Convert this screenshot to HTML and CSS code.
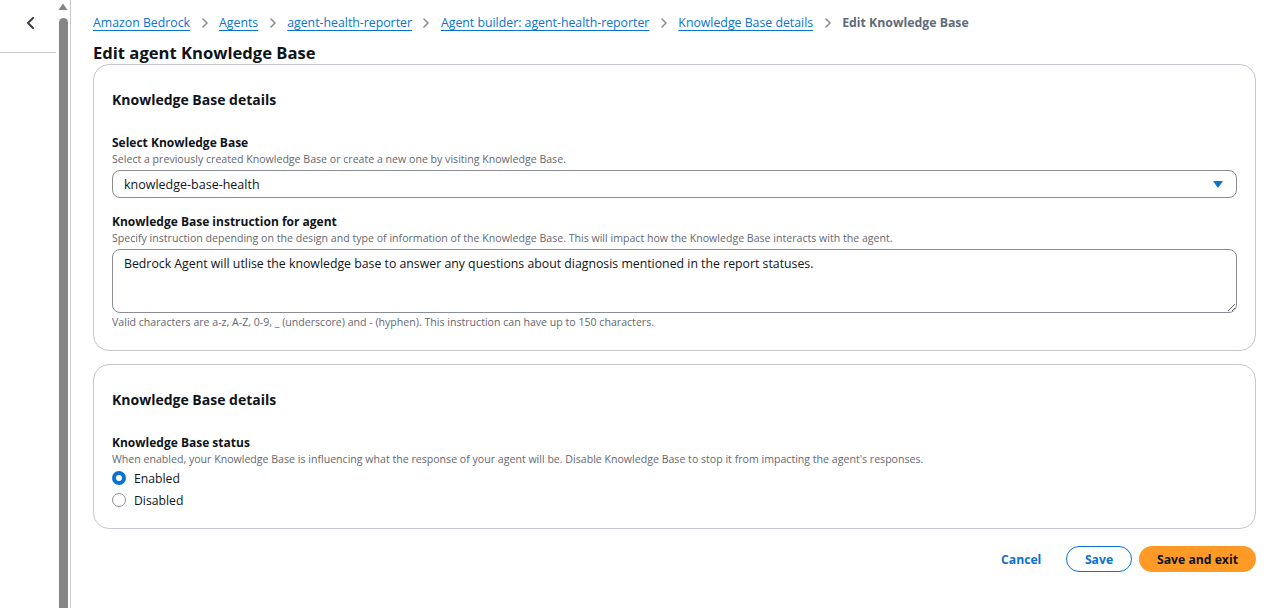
FILE: index.html
```html
<!DOCTYPE html>
<html lang="en">
<head>
<meta charset="utf-8">
<title>Edit agent Knowledge Base</title>
<link rel="stylesheet" href="styles.css">
</head>
<body>
<div class="app">
  <aside class="nav">
    <div class="nav-top">
      <svg class="nav-chev" width="10" height="12" viewBox="0 0 10 12"><path d="M7 1 L2 6 L7 11" fill="none" stroke="#3b3f46" stroke-width="2" stroke-linecap="round" stroke-linejoin="round"/></svg>
    </div>
  </aside>
  <div class="scrollbar">
    <svg class="scroll-up" width="10" height="8" viewBox="0 0 10 8"><path d="M5 0.5 L9.5 7 L0.5 7 Z" fill="#858585"/></svg>
    <div class="scroll-thumb"></div>
  </div>
  <main class="main">
    <nav class="crumbs">
      <a href="#">Amazon Bedrock</a><span class="sep"><svg width="8" height="12" viewBox="0 0 8 12"><path d="M2 2 L6 6 L2 10" fill="none" stroke="#8c8c94" stroke-width="1.6" stroke-linecap="round" stroke-linejoin="round"/></svg></span>
      <a href="#">Agents</a><span class="sep"><svg width="8" height="12" viewBox="0 0 8 12"><path d="M2 2 L6 6 L2 10" fill="none" stroke="#8c8c94" stroke-width="1.6" stroke-linecap="round" stroke-linejoin="round"/></svg></span>
      <a href="#">agent-health-reporter</a><span class="sep"><svg width="8" height="12" viewBox="0 0 8 12"><path d="M2 2 L6 6 L2 10" fill="none" stroke="#8c8c94" stroke-width="1.6" stroke-linecap="round" stroke-linejoin="round"/></svg></span>
      <a href="#">Agent builder: agent-health-reporter</a><span class="sep"><svg width="8" height="12" viewBox="0 0 8 12"><path d="M2 2 L6 6 L2 10" fill="none" stroke="#8c8c94" stroke-width="1.6" stroke-linecap="round" stroke-linejoin="round"/></svg></span>
      <a href="#">Knowledge Base details</a><span class="sep"><svg width="8" height="12" viewBox="0 0 8 12"><path d="M2 2 L6 6 L2 10" fill="none" stroke="#8c8c94" stroke-width="1.6" stroke-linecap="round" stroke-linejoin="round"/></svg></span>
      <span class="current">Edit Knowledge Base</span>
    </nav>
    <h1 class="title">Edit agent Knowledge Base</h1>

    <section class="card card-one">
      <h2 class="card-title">Knowledge Base details</h2>
      <div class="field field-first">
        <div class="label">Select Knowledge Base</div>
        <div class="desc">Select a previously created Knowledge Base or create a new one by visiting Knowledge Base.</div>
        <div class="select">
          <span>knowledge-base-health</span>
          <svg class="caret" width="10" height="7" viewBox="0 0 10 7"><path d="M0 0 H10 L5 7 Z" fill="#0972d3"/></svg>
        </div>
      </div>
      <div class="field field-second">
        <div class="label">Knowledge Base instruction for agent</div>
        <div class="desc">Specify instruction depending on the design and type of information of the Knowledge Base. This will impact how the Knowledge Base interacts with the agent.</div>
        <textarea class="textarea" readonly>Bedrock Agent will utlise the knowledge base to answer any questions about diagnosis mentioned in the report statuses.</textarea>
        <div class="constraint">Valid characters are a-z, A-Z, 0-9, _ (underscore) and - (hyphen). This instruction can have up to 150 characters.</div>
      </div>
    </section>

    <section class="card card-two">
      <h2 class="card-title">Knowledge Base details</h2>
      <div class="field field-first">
        <div class="label">Knowledge Base status</div>
        <div class="desc">When enabled, your Knowledge Base is influencing what the response of your agent will be. Disable Knowledge Base to stop it from impacting the agent's responses.</div>
        <div class="radios">
          <div class="radio-row"><span class="radio radio-on"></span><span>Enabled</span></div>
          <div class="radio-row"><span class="radio"></span><span>Disabled</span></div>
        </div>
      </div>
    </section>

    <div class="actions">
      <button class="btn btn-link">Cancel</button>
      <button class="btn btn-normal">Save</button>
      <button class="btn btn-primary">Save and exit</button>
    </div>
  </main>
</div>
</body>
</html>
```

FILE: styles.css
```css
* { box-sizing: border-box; }
html, body { margin: 0; padding: 0; }
body {
  font-family: "Open Sans", "Noto Sans", Arial, sans-serif;
  color: #0f141a;
  background: #fff;
  width: 1272px;
  height: 608px;
  overflow: hidden;
}
.app {
  display: flex;
  height: 608px;
}
.nav {
  width: 58px;
  flex: none;
}
.nav-top {
  height: 53px;
  border-bottom: 1px solid #c6c6cd;
  margin-right: 2px;
  display: flex;
  justify-content: flex-end;
  padding: 17px 20px 0 0;
}
.nav-chev { display: block; }
.scrollbar {
  width: 13px;
  flex: none;
  display: flex;
  flex-direction: column;
  align-items: center;
  border-right: 1px solid #c6c6cd;
  padding-right: 2px;
}
.scroll-up { display: block; margin-top: 3px; }
.scroll-thumb {
  width: 9px;
  flex: 1;
  margin-top: 7px;
  background: #858585;
  border-radius: 5px 5px 0 0;
}
.main {
  flex: 1;
  padding: 12px 16px 0 22px;
}
.crumbs {
  display: flex;
  align-items: center;
  font-size: 12.3px;
  line-height: 20px;
  height: 20px;
  padding-top: 1px;
}
.crumbs a {
  color: #0972d3;
  text-decoration: underline;
  text-underline-offset: 3px;
  text-decoration-thickness: 1px;
}
.crumbs .sep {
  display: flex;
  width: 29px;
  justify-content: center;
}
.crumbs .current {
  color: #5f6b7a;
  font-weight: 700;
}
.title {
  margin: 10px 0 0 0;
  font-size: 16.6px;
  line-height: 22px;
  font-weight: 700;
}
.card {
  border: 1px solid #c6c6cd;
  border-radius: 16px;
  padding: 25px 18px 21px;
}
.card-one { margin-top: 0; }
.card-two { margin-top: 13px; padding-top: 25px; padding-bottom: 17px; }
.card-title {
  margin: 0;
  font-size: 14px;
  line-height: 20px;
  font-weight: 700;
}
.field-first { margin-top: 25px; }
.field-second { margin-top: 16px; }
.label {
  font-size: 12px;
  line-height: 16px;
  font-weight: 700;
}
.desc {
  font-size: 10.6px;
  line-height: 16px;
  color: #656871;
}
.select {
  margin-top: 3px;
  height: 28px;
  border: 1px solid #8c8c94;
  border-radius: 8px;
  display: flex;
  align-items: center;
  justify-content: space-between;
  padding: 0 13px 0 11px;
  font-size: 12.5px;
}
.caret { display: block; }
.textarea {
  display: block;
  margin-top: 3px;
  width: 100%;
  height: 64px;
  border: 1px solid #8c8c94;
  border-radius: 8px;
  padding: 5px 11px;
  font-family: inherit;
  font-size: 12.3px;
  line-height: 18px;
  color: #0f141a;
  resize: vertical;
  outline: none;
}
.constraint {
  margin-top: 2px;
  font-size: 10.6px;
  line-height: 14px;
  color: #656871;
}
.radios { display: flex; flex-direction: column; }
.radio-row {
  display: flex;
  align-items: center;
  height: 22px;
  font-size: 12.2px;
  gap: 8px;
}
.radio {
  width: 14px;
  height: 14px;
  border-radius: 50%;
  border: 1.5px solid #8c8c94;
  flex: none;
}
.radio-on {
  border: 4px solid #0972d3;
  background: #fff;
}
.actions {
  display: flex;
  justify-content: flex-end;
  align-items: center;
  margin-top: 17px;
  gap: 7px;
}
.btn {
  height: 26px;
  border-radius: 13px;
  font-family: inherit;
  font-size: 12.2px;
  font-weight: 700;
  padding: 0;
  cursor: pointer;
  white-space: nowrap;
}
.btn-link {
  border: none;
  background: none;
  color: #0972d3;
  width: 54px;
  text-align: left;
  padding-left: 1px;
  margin-right: 5px;
}
.btn-normal {
  width: 66px;
  border: 1.5px solid #0972d3;
  background: #fff;
  color: #0972d3;
}
.btn-primary {
  width: 117px;
  border: none;
  background: #ff9a26;
  color: #0f141a;
}
```
